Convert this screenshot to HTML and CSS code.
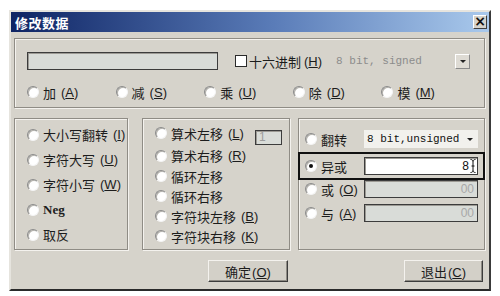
FILE: index.html
```html
<!DOCTYPE html>
<html lang="zh-CN">
<head>
  <meta charset="UTF-8">
  <title>修改数据</title>
  <link rel="stylesheet" href="styles.css">
</head>
<body>
  <div class="window">
    <div class="titlebar">
      <span class="title">修改数据</span>
      <span class="close">×</span>
    </div>
    <div class="content">
      <div class="group top-group">
        <div class="top-row">
          <div class="field value-field"></div>
          <label class="check"><span class="box"></span>十六进制<span class="key">(<u>H</u>)</span></label>
          <span class="type-text">8 bit, signed</span>
          <span class="drop-btn"><span class="arrow"></span></span>
        </div>
        <div class="op-row">
          <label class="opt"><span class="radio"></span>加<span class="key">(<u>A</u>)</span></label>
          <label class="opt"><span class="radio"></span>减<span class="key">(<u>S</u>)</span></label>
          <label class="opt"><span class="radio"></span>乘<span class="key">(<u>U</u>)</span></label>
          <label class="opt"><span class="radio"></span>除<span class="key">(<u>D</u>)</span></label>
          <label class="opt"><span class="radio"></span>模<span class="key">(<u>M</u>)</span></label>
        </div>
      </div>

      <div class="groups">
        <div class="group case-group">
          <label class="opt"><span class="radio"></span>大小写翻转<span class="key">(<u>I</u>)</span></label>
          <label class="opt"><span class="radio"></span>字符大写<span class="key">(<u>U</u>)</span></label>
          <label class="opt"><span class="radio"></span>字符小写<span class="key">(<u>W</u>)</span></label>
          <label class="opt"><span class="radio"></span><span class="neg">Neg</span></label>
          <label class="opt"><span class="radio"></span>取反</label>
        </div>

        <div class="group shift-group">
          <div class="opt r1"><span class="radio"></span>算术左移<span class="key">(<u>L</u>)</span><span class="field count-field">1</span></div>
          <label class="opt r2"><span class="radio"></span>算术右移<span class="key">(<u>R</u>)</span></label>
          <label class="opt"><span class="radio"></span>循环左移</label>
          <label class="opt"><span class="radio"></span>循环右移</label>
          <label class="opt"><span class="radio"></span>字符块左移<span class="key">(<u>B</u>)</span></label>
          <label class="opt"><span class="radio"></span>字符块右移<span class="key">(<u>K</u>)</span></label>
        </div>

        <div class="group bit-group">
          <div class="opt b1">
            <span class="radio"></span>翻转
            <span class="combo">8 bit,unsigned<span class="arrow"></span></span>
          </div>
          <div class="opt b2 focused">
            <span class="radio checked"></span>异或
            <span class="field xor-field">8<svg class="ibeam" width="6" height="14" viewBox="0 0 6 14"><path d="M0.5 0.5 C2 0.5 3 1 3 2.5 L3 11.5 C3 13 2 13.5 0.5 13.5 M5.5 0.5 C4 0.5 3 1 3 2.5 M3 11.5 C3 13 4 13.5 5.5 13.5 M1.5 7 L4.5 7" fill="none" stroke="#111" stroke-width="1"/></svg></span>
          </div>
          <div class="opt b3">
            <span class="radio"></span>或<span class="key">(<u>O</u>)</span>
            <span class="field off-field">00</span>
          </div>
          <div class="opt b4">
            <span class="radio"></span>与<span class="key">(<u>A</u>)</span>
            <span class="field off-field">00</span>
          </div>
        </div>
      </div>

      <div class="buttons">
        <button class="btn ok">确定<span class="key">(<u>O</u>)</span></button>
        <button class="btn cancel">退出<span class="key">(<u>C</u>)</span></button>
      </div>
    </div>
  </div>
</body>
</html>
```

FILE: styles.css
```css
body {
  margin: 0;
  background: #fff;
  font-family: "Liberation Sans", "Noto Sans CJK SC", sans-serif;
  font-size: 13px;
  color: #1c1c1c;
  text-autospace: no-autospace;
}
.window {
  margin: 10px 0 0 9px;
  width: 482px;
  height: 281px;
  box-sizing: border-box;
  background: #d6d3cb;
  border: 2px solid;
  border-color: #e6e4de #3a3a3a #2a2a2a #e6e4de;
  display: flex;
  flex-direction: column;
}
.titlebar {
  height: 20px;
  background: linear-gradient(90deg, #0e2464 0%, #5a7cb8 55%, #a9c9ec 100%);
  display: flex;
  align-items: center;
  padding: 0 2px 0 4px;
}
.title {
  color: #fff;
  font-weight: 700;
  font-size: 13px;
  letter-spacing: 0.5px;
}
.close {
  margin-left: auto;
  width: 14px;
  height: 14px;
  box-sizing: border-box;
  background: #d6d3cb;
  border: 1px solid;
  border-color: #fff #404040 #404040 #fff;
  font-family: "DejaVu Sans", sans-serif;
  font-weight: 700;
  font-size: 14px;
  line-height: 11px;
  text-align: center;
  color: #111;
}
.content {
  padding: 6px 4px 0 3px;
}
.key {
  font-family: "Liberation Sans", sans-serif;
  margin-left: 1px;
}
/* etched group boxes */
.group {
  box-sizing: border-box;
  border: 1px solid #8f8c85;
  box-shadow: inset 1px 1px 0 #f4f2ee, 1px 1px 0 #f4f2ee;
}
.top-group {
  height: 70px;
  padding: 13px 14px 0 12px;
}
.top-row {
  display: flex;
  align-items: center;
  height: 18px;
}
.field {
  box-sizing: border-box;
  height: 18px;
  border: 1px solid #3c3c3c;
  box-shadow: inset 1px 1px 0 #9c9a94;
  background: #d9dcd8;
  font-size: 12px;
  line-height: 16px;
  color: #a4a4a4;
}
.value-field {
  width: 191px;
}
.check {
  display: flex;
  align-items: center;
  margin-left: 17px;
  gap: 2px;
}
.box {
  width: 12px;
  height: 12px;
  box-sizing: border-box;
  border: 1px solid #2a2a2a;
  background: #fff;
}
.type-text {
  margin-left: 14px;
  font-family: "Liberation Mono", monospace;
  font-size: 11px;
  color: #8c8c8c;
}
.drop-btn {
  margin-left: auto;
  width: 15px;
  height: 15px;
  box-sizing: border-box;
  background: #dedbd4;
  border: 1px solid;
  border-color: #fff #8a8a8a #8a8a8a #fff;
  display: flex;
  align-items: center;
  justify-content: center;
}
.arrow {
  width: 0;
  height: 0;
  border-left: 3px solid transparent;
  border-right: 3px solid transparent;
  border-top: 3px solid #222;
}
.op-row {
  display: flex;
  margin-top: 14px;
  height: 16px;
}
.op-row .opt {
  width: 99px;
}
.opt {
  display: flex;
  align-items: center;
  gap: 4px;
  white-space: nowrap;
}
.radio {
  flex: none;
  width: 12px;
  height: 12px;
  box-sizing: border-box;
  border-radius: 50%;
  background: #fff;
  border: 1px solid;
  border-color: #8a8a8a #f4f4f4 #f4f4f4 #8a8a8a;
  box-shadow: inset 1px 1px 0 #b4b2ac;
  display: flex;
  align-items: center;
  justify-content: center;
}
.radio.checked::after {
  content: "";
  width: 4px;
  height: 4px;
  border-radius: 50%;
  background: #111;
}
u {
  text-underline-offset: 1px;
}
.neg {
  font-family: "Liberation Serif", serif;
  font-weight: 700;
}
.groups {
  display: flex;
  margin-top: 10px;
  height: 132px;
}
.case-group {
  width: 114px;
  margin-right: 14px;
  padding: 3px 0 0 12px;
}
.case-group .opt {
  height: 25px;
}
.shift-group {
  width: 148px;
  margin-right: 8px;
  padding: 2px 7px 0 12px;
}
.shift-group .opt {
  height: 20px;
}
.shift-group .r1 {
  height: 24px;
}
.shift-group .r2 {
  height: 21px;
}
.count-field {
  margin-left: auto;
  align-self: flex-end;
  width: 27px;
  height: 15px;
  line-height: 13px;
  padding-left: 3px;
  color: #9c9c9c;
}
.bit-group {
  flex: 1;
  padding: 11px 6px 0 6px;
}
.bit-group .opt {
  height: 18px;
}
.combo {
  margin-left: auto;
  width: 114px;
  height: 18px;
  box-sizing: border-box;
  background: #f2f1ed;
  display: flex;
  align-items: center;
  padding: 0 3px 0 3px;
  font-family: "Liberation Mono", monospace;
  font-size: 11px;
  color: #111;
}
.combo .arrow {
  margin-left: auto;
  margin-right: 2px;
}
.bit-group .b2 {
  height: 28px;
  box-sizing: border-box;
  margin: 4px -7px 0 -7px;
  padding: 0 5px;
  border: 2px solid #111;
}
.xor-field {
  margin-left: auto;
  width: 114px;
  background: #fff;
  color: #111;
  display: flex;
  align-items: center;
  justify-content: flex-end;
  padding-right: 1px;
}
.ibeam {
  margin-left: 1px;
}
.off-field {
  margin-left: auto;
  width: 114px;
  text-align: right;
  padding-right: 3px;
  color: #a8a8a8;
}
.bit-group .b4 {
  margin-top: 6px;
}
.buttons {
  display: flex;
  margin-top: 10px;
}
.btn {
  height: 22px;
  box-sizing: border-box;
  background: #d3d0c8;
  border: 1px solid;
  border-color: #f4f2ee #3c3c3c #3c3c3c #f4f2ee;
  box-shadow: inset -1px -1px 0 #8e8b84;
  font-family: "Liberation Sans", "Noto Sans CJK SC", sans-serif;
  font-size: 13px;
  color: #1c1c1c;
  padding: 0;
}
.ok {
  margin-left: 194px;
  width: 80px;
}
.cancel {
  margin-left: auto;
  margin-right: 2px;
  width: 79px;
}
```
